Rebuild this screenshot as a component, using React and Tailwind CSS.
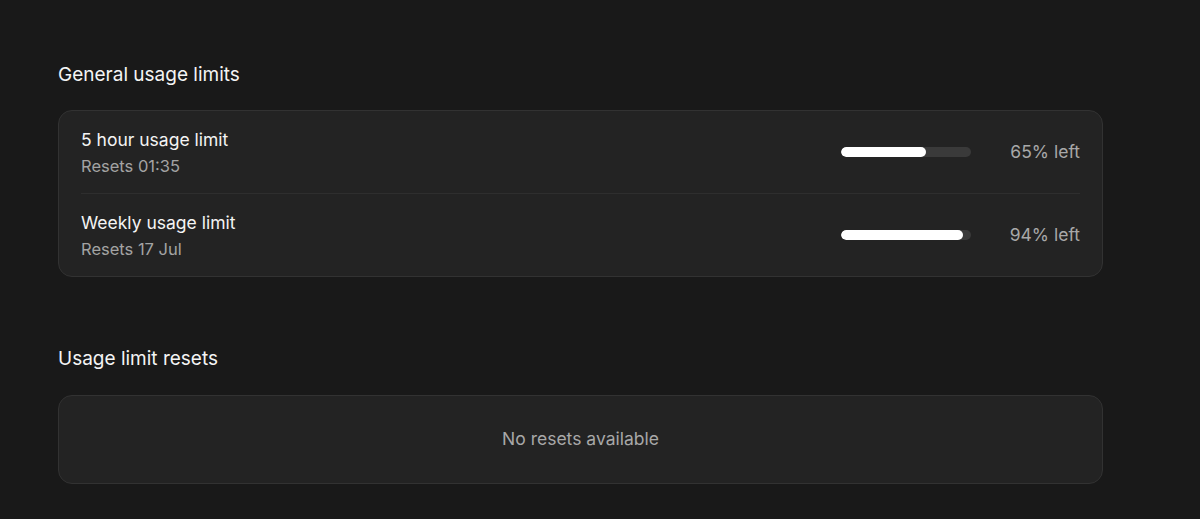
import React from "react";

const limits = [
  { title: "5 hour usage limit", reset: "Resets 01:35", left: 65 },
  { title: "Weekly usage limit", reset: "Resets 17 Jul", left: 94 },
];

const LimitRow = ({ title, reset, left }) => (
  <div className="flex items-center justify-between pt-[17px] pb-[17px]">
    <div className="flex flex-col gap-[4px]">
      <span className="text-[17.5px] leading-6 text-[#f4f4f4]">{title}</span>
      <span className="text-[16.5px] leading-5 text-[#a3a3a3]">{reset}</span>
    </div>
    <div className="flex items-center">
      <div className="w-[130px] h-[10px] rounded-full bg-[#3a3a3a] overflow-hidden">
        <div className="h-full rounded-full bg-white" style={{ width: `${left}%` }} />
      </div>
      <span className="w-[109px] text-right text-[17.5px] text-[#a8a8a8]">
        {left}% left
      </span>
    </div>
  </div>
);

export default function App() {
  return (
    <div
      className="min-h-[519px] bg-[#191919] px-[58px] pt-[63px] pr-[97px]"
      style={{ fontFamily: "Inter, 'Noto Sans', sans-serif" }}
    >
      <h2 className="text-[19px] leading-6 text-[#f4f4f4] mb-[23px]">
        General usage limits
      </h2>
      <div className="rounded-[14px] border border-[#323232] bg-[#232323] px-[22px]">
        {limits.map((l, i) => (
          <div key={l.title} className={i > 0 ? "border-t border-[#2e2e2e]" : ""}>
            <LimitRow {...l} />
          </div>
        ))}
      </div>

      <h2 className="text-[19px] leading-6 text-[#f4f4f4] mt-[70px] mb-[24px]">
        Usage limit resets
      </h2>
      <div className="h-[89px] rounded-[14px] border border-[#323232] bg-[#232323] flex items-center justify-center">
        <span className="text-[17.5px] text-[#a8a8a8]">No resets available</span>
      </div>
    </div>
  );
}
